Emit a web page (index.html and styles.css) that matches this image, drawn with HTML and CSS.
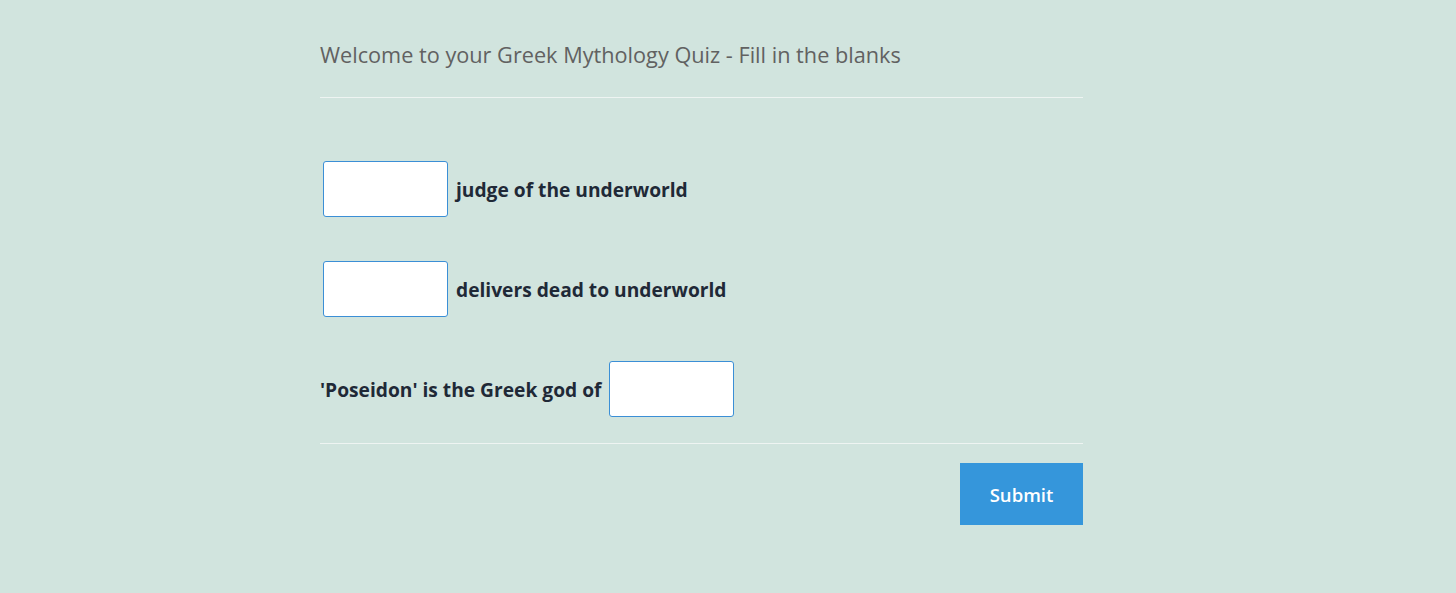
FILE: index.html
```html
<!DOCTYPE html>
<html lang="en">

<head>
    <meta charset="UTF-8">
    <meta name="viewport" content="width=device-width, initial-scale=1.0">
    <title>Greek Mythology Quiz</title>
    <link rel="stylesheet" href="styles.css">
</head>

<body>
    <div class="quiz">
        <h1 class="quiz-title">Welcome to your Greek Mythology Quiz - Fill in the blanks</h1>
        <form class="quiz-form">
            <div class="questions">
                <div class="question">
                    <input type="text" class="blank">
                    <span>judge of the underworld</span>
                </div>
                <div class="question">
                    <input type="text" class="blank">
                    <span>delivers dead to underworld</span>
                </div>
                <div class="question">
                    <span>'Poseidon' is the Greek god of</span>
                    <input type="text" class="blank">
                </div>
            </div>
            <div class="actions">
                <button type="button" class="submit">Submit</button>
            </div>
        </form>
    </div>
</body>

</html>
```

FILE: styles.css
```css
body {
    margin: 0;
    background: #d1e4de;
    font-family: 'Open Sans', sans-serif;
    color: #1f2937;
    min-height: 100vh;
}

.quiz {
    width: 816px;
    box-sizing: border-box;
    margin: 0 auto;
    padding: 40px 53px 0 0;
}

.quiz-title {
    margin: 0;
    padding-bottom: 28px;
    font-size: 21.7px;
    font-weight: 400;
    color: #616161;
    border-bottom: 1px solid #eef4f2;
}

.questions {
    padding: 63px 0 26px;
    border-bottom: 1px solid #eef4f2;
}

.question {
    display: flex;
    align-items: center;
    gap: 8px;
    height: 56px;
    margin-bottom: 44px;
    font-size: 19.2px;
    font-weight: 700;
}

.question:last-child {
    margin-bottom: 0;
}

.blank {
    width: 125px;
    height: 56px;
    box-sizing: border-box;
    margin-left: 3px;
    border: 1px solid #3b8fd6;
    border-radius: 3px;
    background: white;
}

.question span + .blank {
    margin-left: 0;
}

.actions {
    display: flex;
    justify-content: flex-end;
    padding-top: 19px;
}

.submit {
    width: 123px;
    height: 62px;
    border: none;
    background: #3596db;
    color: white;
    font-family: inherit;
    font-size: 18.5px;
    font-weight: 600;
}
```
